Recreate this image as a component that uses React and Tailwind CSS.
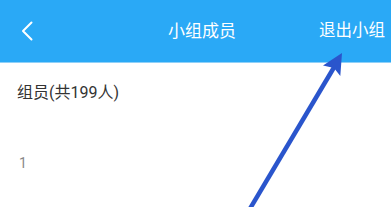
import React from 'react';

const App = () => {
  return (
    <div className="relative w-[391px] h-[207px] overflow-hidden bg-white" style={{ fontFamily: 'Roboto, "Noto Sans CJK SC", sans-serif' }}>
      <div className="flex items-center h-[63px] bg-[#2aa9f6] border-b border-[#8fd0f8] px-5 text-white">
        <svg width="12" height="20" viewBox="0 0 12 20" className="shrink-0 ml-[1px]">
          <path d="M10.5 1.5 L2 10 L10.5 18.5" fill="none" stroke="white" strokeWidth="2" strokeLinecap="round" strokeLinejoin="round" />
        </svg>
        <div className="flex-1 text-center text-[17px] pl-[52px] pt-[1px]">小组成员</div>
        <div className="text-[16.5px] mr-[-14px] pt-[1px]">退出小组</div>
      </div>
      <div className="px-[17px] pt-[18px] text-[16px] text-[#333]">组员(共199人)</div>
      <div className="px-[19px] pt-[48px] text-[14px] text-[#888]">1</div>
      <svg className="absolute left-0 top-0 pointer-events-none" width="391" height="207" viewBox="0 0 391 207">
        <line x1="248" y1="212" x2="336" y2="64" stroke="#2a55cc" strokeWidth="4.5" />
        <path d="M342 53 L340.3 76 L334 68 L323 65.5 Z" fill="#2a55cc" />
      </svg>
    </div>
  );
};

export default App;
